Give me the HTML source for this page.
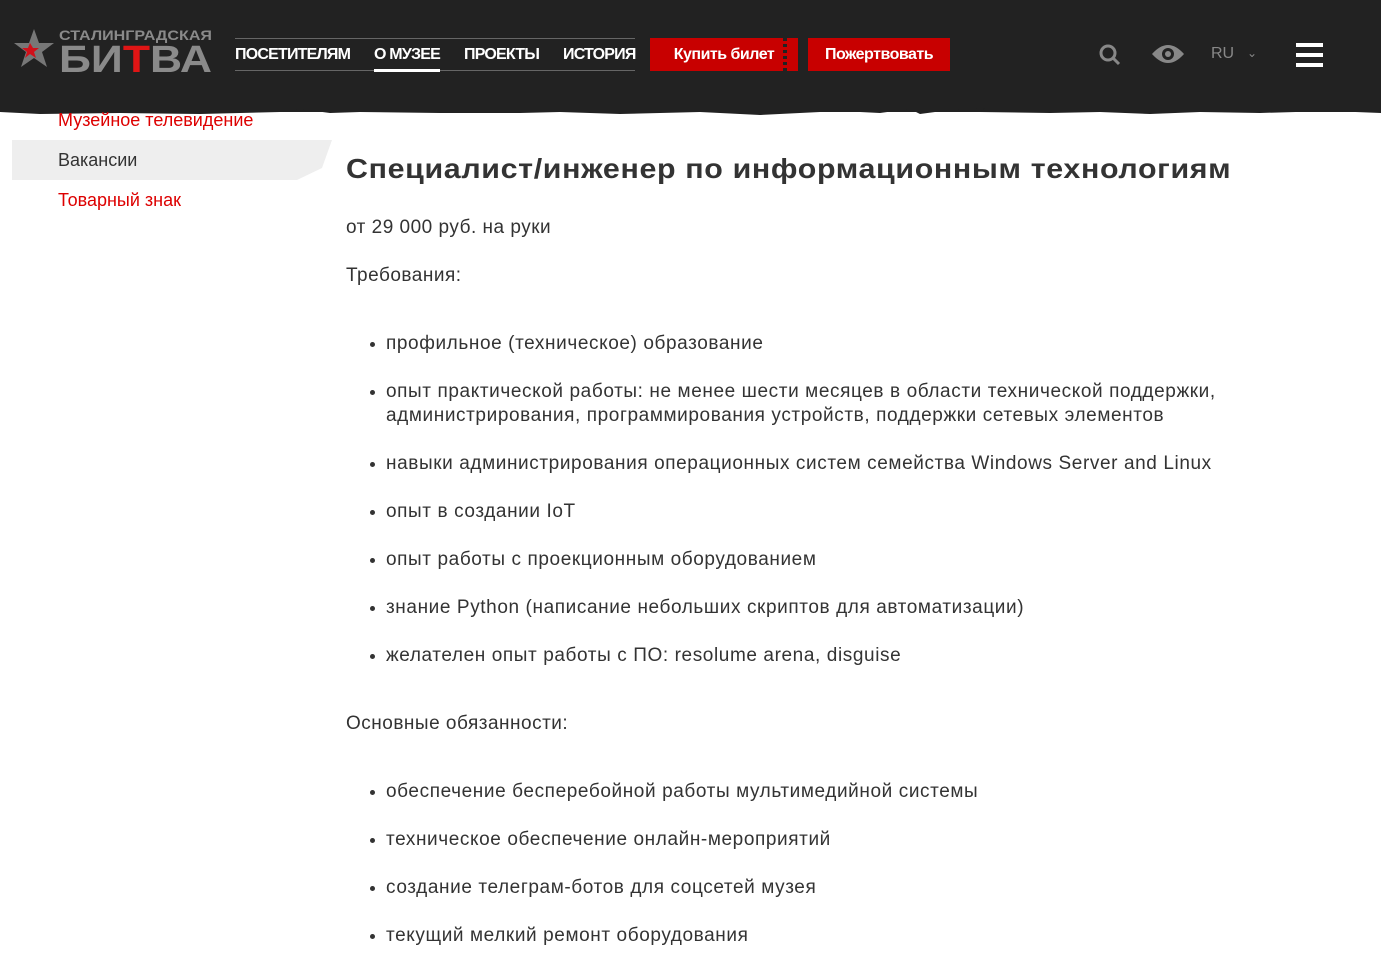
<!DOCTYPE html>
<html><head><meta charset="utf-8"><style>
*{margin:0;padding:0;box-sizing:border-box}
body{width:1381px;height:967px;overflow:hidden;background:#fff;font-family:"Liberation Sans",sans-serif;color:#333;position:relative}
.hdr{position:absolute;left:0;top:0;width:1381px;height:112px;background:#222}
.rag{position:absolute;left:0;top:104px}
.nav{position:absolute;left:235px;top:38px;width:400px;height:33px;border-top:1px solid #666;border-bottom:1px solid #666}
.nav span{position:absolute;top:7px;color:#fff;font-weight:bold;font-size:16px;letter-spacing:-0.8px}
.btn{position:absolute;top:38px;height:33px;background:#c80000;color:#fff;font-weight:bold;font-size:16px;letter-spacing:-0.5px;line-height:33px;text-align:center}
.side{position:absolute;left:58px;font-size:18px}
h1{position:absolute;left:346px;top:153px;font-size:28px;font-weight:bold;color:#333;letter-spacing:0.6px;white-space:nowrap;transform:scaleX(1.085);transform-origin:left}
.t{position:absolute;left:346px;font-size:19px;letter-spacing:0.5px;white-space:nowrap}
.li{position:absolute;left:386px;font-size:19px;letter-spacing:0.6px;line-height:24px;white-space:nowrap}
.li:before{content:"";position:absolute;left:-16px;top:10px;width:5px;height:5px;border-radius:50%;background:#333}
</style></head><body>
<div class="hdr"></div>
<svg class="rag" width="1381" height="16" viewBox="0 0 1381 16"><path d="M0 8 L40 10 L120 9 L200 10 L280 8 L300 5 L330 9 L360 8 L440 9 L520 9 L560 8 L620 10 L700 8 L760 11 L820 8 L860 8 L880 9 L910 5 L920 10 L950 6 L985 4 L980 8 L1050 9 L1100 8 L1150 10 L1200 8 L1260 9 L1330 7 L1381 9 L1381 0 L0 0Z" fill="#222"/></svg>
<svg style="position:absolute;left:12px;top:27px" width="202" height="46" viewBox="0 0 202 46"><polygon points="22,2 27,16 42,16 30,25 35,40 22,31 9,40 14,25 2,16 17,16" fill="#777"/><polygon points="18,16 21,21 27,21 22,25 24,31 18,27 13,31 15,25 10,21 16,21" fill="#d0101a"/><text x="47" y="13" font-family="Liberation Sans" font-weight="bold" font-size="14" fill="#8a8a8a" textLength="153" lengthAdjust="spacingAndGlyphs">СТАЛИНГРАДСКАЯ</text><text x="47" y="45" font-family="Liberation Sans" font-weight="bold" font-size="38" fill="#8a8a8a" textLength="153" lengthAdjust="spacingAndGlyphs">БИ<tspan fill="#e01515">Т</tspan>ВА</text></svg>
<div class="nav"><span style="left:0">ПОСЕТИТЕЛЯМ</span><span style="left:139px">О МУЗЕЕ</span><span style="left:229px">ПРОЕКТЫ</span><span style="left:328px">ИСТОРИЯ</span><div style="position:absolute;left:139px;top:30px;width:66px;height:3px;background:#fff"></div></div>
<div class="btn" style="left:650px;width:148px">Купить билет<div style="position:absolute;left:133px;top:0;width:4px;height:33px;background:repeating-linear-gradient(#222 0 3px,transparent 3px 6px)"></div></div>
<div class="btn" style="left:808px;width:142px">Пожертвовать</div>
<svg style="position:absolute;left:1098px;top:43px" width="24" height="24" viewBox="0 0 24 24"><circle cx="10" cy="10" r="7" stroke="#888" stroke-width="3" fill="none"/><path d="M15 15l6 6" stroke="#888" stroke-width="3"/></svg>
<svg style="position:absolute;left:1150px;top:42px" width="36" height="24" viewBox="0 0 36 24"><path d="M2 12Q18 -6 34 12Q18 30 2 12Z" fill="#888"/><circle cx="18" cy="12" r="6" fill="#222"/><circle cx="18" cy="12" r="3" fill="#888"/></svg>
<div style="position:absolute;left:1211px;top:45px;color:#888;font-size:16px">RU</div>
<div style="position:absolute;left:1247px;top:46px;color:#888;font-size:12px">⌄</div>
<div style="position:absolute;left:1296px;top:43px;width:27px;height:4px;background:#fff;box-shadow:0 10px 0 #fff,0 20px 0 #fff"></div>
<div class="side" style="top:110px;color:#d00">Музейное телевидение</div>
<svg style="position:absolute;left:12px;top:140px" width="320" height="40"><polygon points="0,0 320,0 310,28 285,40 0,40" fill="#eee"/></svg>
<div class="side" style="top:150px;color:#333">Вакансии</div>
<div class="side" style="top:190px;color:#d00">Товарный знак</div>
<h1>Специалист/инженер по информационным технологиям</h1>
<div class="t" style="top:217px">от 29 000 руб. на руки</div>
<div class="t" style="top:265px">Требования:</div>
<div class="li" style="top:332px">профильное (техническое) образование</div>
<div class="li" style="top:380px">опыт практической работы: не менее шести месяцев в области технической поддержки,<br>администрирования, программирования устройств, поддержки сетевых элементов</div>
<div class="li" style="top:452px">навыки администрирования операционных систем семейства Windows Server and Linux</div>
<div class="li" style="top:500px">опыт в создании IoT</div>
<div class="li" style="top:548px">опыт работы с проекционным оборудованием</div>
<div class="li" style="top:596px">знание Python (написание небольших скриптов для автоматизации)</div>
<div class="li" style="top:644px">желателен опыт работы с ПО: resolume arena, disguise</div>
<div class="t" style="top:713px">Основные обязанности:</div>
<div class="li" style="top:780px">обеспечение бесперебойной работы мультимедийной системы</div>
<div class="li" style="top:828px">техническое обеспечение онлайн-мероприятий</div>
<div class="li" style="top:876px">создание телеграм-ботов для соцсетей музея</div>
<div class="li" style="top:924px">текущий мелкий ремонт оборудования</div>
</body></html>
